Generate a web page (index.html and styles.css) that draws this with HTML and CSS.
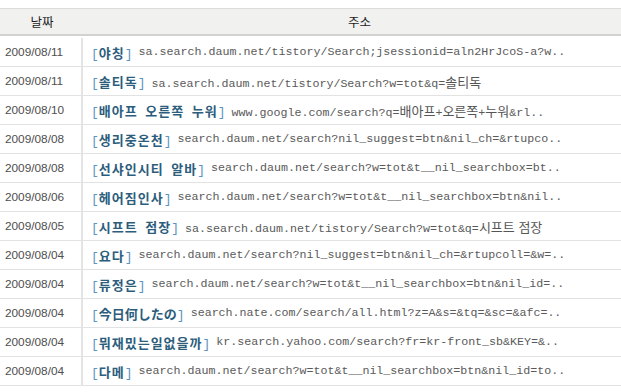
FILE: index.html
```html
<!DOCTYPE html>
<html lang="ko">
<head>
<meta charset="utf-8">
<link rel="stylesheet" href="styles.css">
</head>
<body>
<div class="table">
  <div class="head">
    <div class="hcell date">날짜</div>
    <div class="hcell addr">주소</div>
  </div>
  <div class="body">
    <div class="row"><div class="d">2009/08/11</div><div class="a"><span class="t"><b class="br">[</b>야칭<b class="br">]</b></span> <span class="u">sa.search.daum.net/tistory/Search;jsessionid=aln2HrJcoS-a?w..</span></div></div>
    <div class="row"><div class="d">2009/08/11</div><div class="a"><span class="t"><b class="br">[</b>솔티독<b class="br">]</b></span> <span class="u">sa.search.daum.net/tistory/Search?w=tot&amp;q=<span class="k">솔티독</span></span></div></div>
    <div class="row"><div class="d">2009/08/10</div><div class="a"><span class="t"><b class="br">[</b>배아프 오른쪽 누워<b class="br">]</b></span> <span class="u">www.google.com/search?q=<span class="k">배아프</span>+<span class="k">오른쪽</span>+<span class="k">누워</span>&amp;rl..</span></div></div>
    <div class="row"><div class="d">2009/08/08</div><div class="a"><span class="t"><b class="br">[</b>생리중온천<b class="br">]</b></span> <span class="u">search.daum.net/search?nil_suggest=btn&amp;nil_ch=&amp;rtupco..</span></div></div>
    <div class="row"><div class="d">2009/08/08</div><div class="a"><span class="t"><b class="br">[</b>선샤인시티 알바<b class="br">]</b></span> <span class="u">search.daum.net/search?w=tot&amp;t__nil_searchbox=bt..</span></div></div>
    <div class="row"><div class="d">2009/08/06</div><div class="a"><span class="t"><b class="br">[</b>헤어짐인사<b class="br">]</b></span> <span class="u">search.daum.net/search?w=tot&amp;t__nil_searchbox=btn&amp;nil..</span></div></div>
    <div class="row"><div class="d">2009/08/05</div><div class="a"><span class="t"><b class="br">[</b>시프트 점장<b class="br">]</b></span> <span class="u">sa.search.daum.net/tistory/Search?w=tot&amp;q=<span class="k">시프트 점장</span></span></div></div>
    <div class="row"><div class="d">2009/08/04</div><div class="a"><span class="t"><b class="br">[</b>요다<b class="br">]</b></span> <span class="u">search.daum.net/search?nil_suggest=btn&amp;nil_ch=&amp;rtupcoll=&amp;w=..</span></div></div>
    <div class="row"><div class="d">2009/08/04</div><div class="a"><span class="t"><b class="br">[</b>류정은<b class="br">]</b></span> <span class="u">search.daum.net/search?w=tot&amp;t__nil_searchbox=btn&amp;nil_id=..</span></div></div>
    <div class="row"><div class="d">2009/08/04</div><div class="a"><span class="t jp"><b class="br">[</b>今日何したの<b class="br">]</b></span> <span class="u">search.nate.com/search/all.html?z=A&amp;s=&amp;tq=&amp;sc=&amp;afc=..</span></div></div>
    <div class="row"><div class="d">2009/08/04</div><div class="a"><span class="t"><b class="br">[</b>뭐재밌는일없을까<b class="br">]</b></span> <span class="u">kr.search.yahoo.com/search?fr=kr-front_sb&amp;KEY=&amp;..</span></div></div>
    <div class="row"><div class="d">2009/08/04</div><div class="a"><span class="t"><b class="br">[</b>다메<b class="br">]</b></span> <span class="u">search.daum.net/search?w=tot&amp;t__nil_searchbox=btn&amp;nil_id=to..</span></div></div>
  </div>
</div>
</body>
</html>
```

FILE: styles.css
```css
html, body {
  margin: 0;
  padding: 0;
  background: #fff;
}
body {
  padding-top: 8px;
  font-family: "Liberation Sans", "Noto Sans CJK KR", sans-serif;
  font-size: 12px;
  color: #555;
  overflow: hidden;
}
.table {
  width: 100%;
}
.head {
  display: grid;
  grid-template-columns: 83px 1fr;
  height: 25px;
  background: #f1f1ef;
  border-top: 1px solid #dcdcdc;
  border-bottom: 2px solid #d2d2d0;
}
.hcell {
  display: flex;
  align-items: center;
  justify-content: center;
  font-family: "Noto Sans CJK KR", sans-serif;
  font-size: 12.5px;
  color: #1e1e1e;
}
.hcell.date {
  padding-left: 1px;
}
.hcell.addr {
  padding-left: 15px;
}
.body {
  padding-top: 2px;
}
.row {
  display: grid;
  grid-template-columns: 83px 1fr;
  height: 28px;
  border-bottom: 1px solid #e2e2e2;
}
.d {
  display: flex;
  align-items: center;
  padding-left: 5px;
  font-family: "Liberation Sans", sans-serif;
  font-size: 11.8px;
  color: #4e4e4e;
  border-right: 2px solid #e4e4e4;
}
.a {
  display: flex;
  align-items: center;
  padding-left: 8px;
  white-space: nowrap;
  overflow: hidden;
}
.t {
  font-family: "Noto Sans CJK KR", sans-serif;
  font-weight: bold;
  font-size: 13px;
  letter-spacing: 1px;
  word-spacing: 3px;
  color: #2c5d7c;
  margin-right: 6px;
}
.t.jp {
  letter-spacing: 0;
}
.br {
  font-family: "Liberation Mono", monospace;
  font-weight: normal;
  letter-spacing: 0;
  color: #5c94bf;
  font-size: 13px;
}
.u {
  font-family: "Liberation Mono", "Noto Sans CJK KR", monospace;
  font-size: 11.67px;
  color: #5a5a5a;
}
.k {
  font-family: "Noto Sans CJK KR", sans-serif;
  font-size: 13px;
  color: #555;
}
```
